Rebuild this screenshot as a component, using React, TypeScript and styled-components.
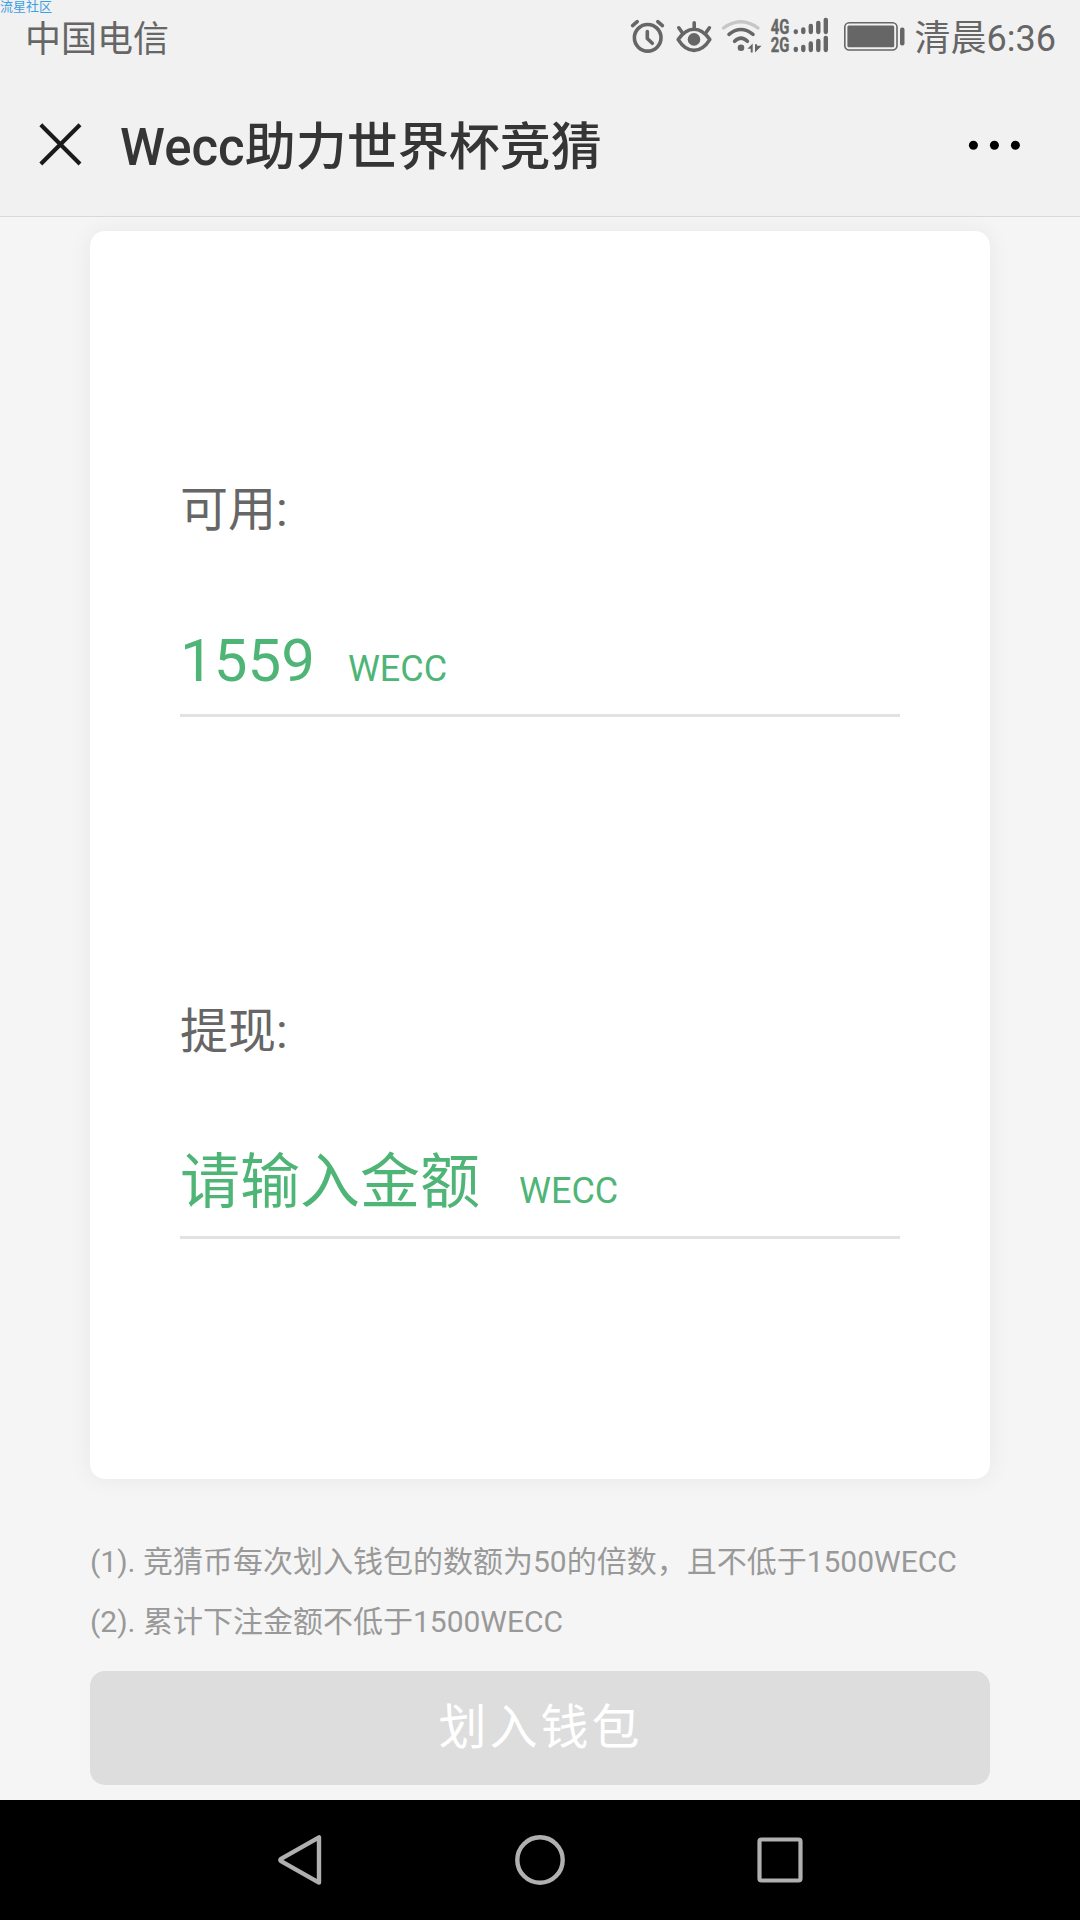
import React from "react";
import styled, { createGlobalStyle } from "styled-components";

const GlobalStyle = createGlobalStyle`
  * { box-sizing: border-box; }
  html, body { margin: 0; padding: 0; background: #f5f5f5; }
  body { font-family: Roboto, "Noto Sans CJK SC", sans-serif; }
`;

const Screen = styled.div`
  position: relative;
  display: flex;
  flex-direction: column;
  width: 1080px;
  height: 1920px;
  background: #f5f5f5;
  overflow: hidden;
`;

const Watermark = styled.div`
  position: absolute;
  left: 0;
  top: 0;
  font-size: 13px;
  line-height: 13px;
  color: #3d9fe6;
  white-space: nowrap;
`;

const StatusBar = styled.header`
  display: flex;
  justify-content: space-between;
  height: 72px;
  padding: 3px 24px 0 25px;
  background: #f1f1f1;
  color: #666;
  font-size: 36px;
  line-height: 72px;
  white-space: nowrap;
`;

const Carrier = styled.span`
  padding-top: 1px;
`;

const StatusIcons = styled.div`
  display: flex;
  align-items: flex-start;
  height: 69px;
`;

const StatusGlyphs = styled.svg`
  display: block;
  width: 285px;
  height: 60px;
  margin: -3px 10px 0 0;
`;

const TitleBar = styled.nav`
  display: flex;
  align-items: center;
  height: 145px;
  padding: 0 60px 0 36px;
  background: #f1f1f1;
  border-bottom: 1px solid #d9d9d9;
`;

const IconButton = styled.button`
  display: flex;
  padding: 0;
  border: 0;
  background: none;
`;

const Title = styled.h1`
  flex: 1;
  margin: 0 0 0 36px;
  padding-top: 8px;
  color: #353535;
  font-size: 51px;
  font-weight: 500;
  line-height: 72px;
  white-space: nowrap;
`;

const Content = styled.main`
  display: flex;
  flex-direction: column;
  height: 1583px;
  padding: 14px 90px 0;
`;

const Card = styled.section`
  height: 1248px;
  padding: 247px 90px 0;
  border-radius: 15px;
  background: #fff;
  box-shadow: 0 0 24px rgba(0, 0, 0, 0.06);
`;

const Field = styled.div`
  height: 522px;
`;

const FieldLabel = styled.div`
  height: 64px;
  color: #666;
  font-size: 48px;
  line-height: 64px;
`;

const FieldRow = styled.div<{ $gap: number }>`
  display: flex;
  align-items: baseline;
  gap: ${(p) => p.$gap}px;
  height: 92px;
  margin-top: 83px;
  border-bottom: 3px solid #e2e2e2;
  color: #4fb576;
  white-space: nowrap;
`;

const Amount = styled.span`
  font-size: 60px;
  line-height: 72px;
`;

const Unit = styled.span`
  font-size: 36px;
  line-height: 42px;
`;

const Notes = styled.ol`
  margin: 53px 0 0;
  padding: 0;
  list-style: none;
  color: #999;
  font-size: 30px;
  line-height: 60px;
  white-space: nowrap;
`;

const SubmitButton = styled.button`
  height: 114px;
  margin-top: 19px;
  padding: 0 0 0 1px;
  border: 0;
  border-radius: 15px;
  background: #ddd;
  color: #fff;
  font-family: inherit;
  font-size: 48px;
  line-height: 114px;
  letter-spacing: 3px;
`;

const SystemNav = styled.footer`
  display: grid;
  grid-template-columns: repeat(3, 240px);
  justify-content: center;
  align-items: center;
  justify-items: center;
  height: 120px;
  background: #000;
`;

const rows = [
  { label: "4G", base: 34, tops: [29.3, 27.3, 23.7, 20.7, 17.7] },
  { label: "2G", base: 52, tops: [46.7, 44.7, 41.3, 38.7, 35.7] },
];

const StatusIconSet = () => (
  <StatusGlyphs viewBox="620 0 285 60" fill="none" stroke="#666" strokeLinecap="round" strokeLinejoin="round">
    <g strokeWidth="3.6">
      <circle cx="647.7" cy="37.8" r="13.3" />
      <path d="M647.3 31.5v7l5 4.8" />
      <path d="M632.6 25.6l4.6-4M662.4 25.6l-4.6-4" />
    </g>
    <g strokeWidth="3.6">
      <path d="M678.2 39.6Q685 29.2 694 29.2T709.8 39.6Q703 50.4 694 50.4T678.2 39.6Z" />
      <path d="M694.2 22.8v6M678.8 27.8l3 4.2M709.4 27.8l-3 4.2" />
    </g>
    <circle cx="694" cy="39.4" r="6.3" fill="#666" stroke="none" />
    <path d="M723.5 28Q740.7 15.5 758 28" stroke="#c6c6c6" strokeWidth="3.2" />
    <path d="M729 34.3Q740.8 24.7 753 34.3" strokeWidth="3.6" />
    <path d="M734.6 41.3Q741 35 747.4 41.3" strokeWidth="3.6" />
    <circle cx="741" cy="47.8" r="3.3" fill="#666" stroke="none" />
    <path d="M747.4 48.8L752.7 43.6V52.4H750.7V48.8ZM755 44.2V52.4L761.6 45.8H757V44.2Z" fill="#666" stroke="none" />
    {rows.map((row) => (
      <g key={row.label}>
        <text
          x="770.8"
          y={row.base}
          fill="#666"
          strokeWidth="0.4"
          fontFamily="Roboto, sans-serif"
          fontWeight="700"
          fontSize="20.5"
          textLength="18.6"
          lengthAdjust="spacingAndGlyphs"
        >
          {row.label}
        </text>
        {row.tops.map((top, i) => (
          <rect
            key={top}
            x={793.6 + i * 7.5}
            y={top}
            width="4.4"
            height={row.base - top + 0.2}
            rx="2.1"
            fill="#666"
            stroke="none"
          />
        ))}
      </g>
    ))}
    <rect x="844.8" y="22.8" width="52.2" height="27.2" rx="4.5" strokeWidth="1.6" />
    <rect x="847.4" y="25.6" width="46.8" height="21.6" rx="1.5" fill="#666" stroke="none" />
    <rect x="900" y="27.6" width="4.5" height="17.8" rx="2" fill="#666" stroke="none" />
  </StatusGlyphs>
);

export default function App() {
  return (
    <>
      <GlobalStyle />
      <Screen>
        <StatusBar>
          <Carrier>中国电信</Carrier>
          <StatusIcons>
            <StatusIconSet />
            <span>清晨6:36</span>
          </StatusIcons>
        </StatusBar>
        <TitleBar>
          <IconButton aria-label="关闭">
            <svg width="48" height="48" viewBox="0 0 48 48" stroke="#1a1a1a" strokeWidth="4.1">
              <path d="M4.8 4.8L44 44M44 4.8L4.8 44" />
            </svg>
          </IconButton>
          <Title>Wecc助力世界杯竞猜</Title>
          <IconButton aria-label="更多">
            <svg width="52" height="12" viewBox="0 0 52 12" fill="#000">
              <circle cx="5.4" cy="7.3" r="4.5" />
              <circle cx="26.4" cy="7.3" r="4.5" />
              <circle cx="47.4" cy="7.3" r="4.5" />
            </svg>
          </IconButton>
        </TitleBar>
        <Content>
          <Card>
            <Field>
              <FieldLabel>可用:</FieldLabel>
              <FieldRow $gap={33}>
                <Amount>1559</Amount>
                <Unit>WECC</Unit>
              </FieldRow>
            </Field>
            <Field>
              <FieldLabel>提现:</FieldLabel>
              <FieldRow $gap={39}>
                <Amount>请输入金额</Amount>
                <Unit>WECC</Unit>
              </FieldRow>
            </Field>
          </Card>
          <Notes>
            <li>(1). 竞猜币每次划入钱包的数额为50的倍数，且不低于1500WECC</li>
            <li>(2). 累计下注金额不低于1500WECC</li>
          </Notes>
          <SubmitButton>划入钱包</SubmitButton>
        </Content>
        <SystemNav>
          <svg width="52" height="56" viewBox="-26 -28 52 56" fill="none" stroke="#b0b0b0" strokeWidth="4.4" strokeLinejoin="round">
            <path d="M19 -22.6V22.6L-19 1.2Q-20.4 0 -19 -1.2Z" />
          </svg>
          <svg width="52" height="52" viewBox="-26 -26 52 52" fill="none" stroke="#b0b0b0" strokeWidth="4.4">
            <circle r="22.7" />
          </svg>
          <svg width="52" height="52" viewBox="-26 -26 52 52" fill="none" stroke="#b0b0b0" strokeWidth="4.2">
            <rect x="-20.5" y="-20.5" width="41" height="41" rx="2" />
          </svg>
        </SystemNav>
        <Watermark>流星社区</Watermark>
      </Screen>
    </>
  );
}
